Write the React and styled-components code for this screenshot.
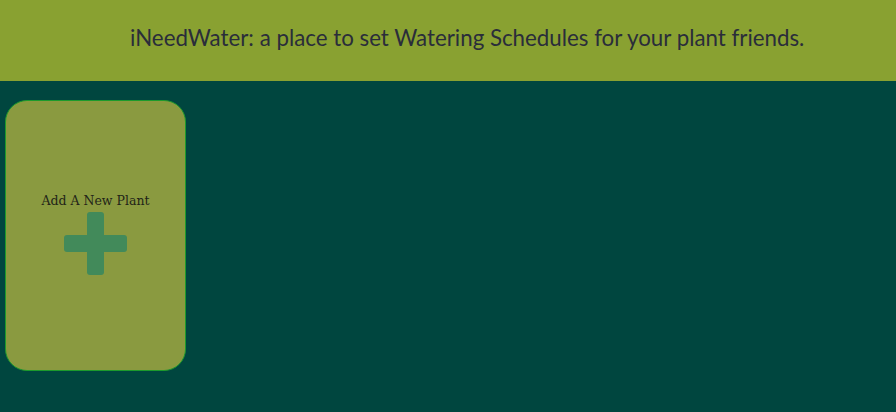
import React from 'react'
import styled, { createGlobalStyle } from 'styled-components'

const GlobalStyle = createGlobalStyle`
    html, body {
        margin: 0;
        padding: 0;
        background: #00463f;
    }
    body {
        min-height: 412px;
    }
`

const Page = styled.div`
    width: 896px;
    height: 412px;
    background: #00463f;
    overflow: hidden;
`

const Header = styled.header`
    height: 81px;
    background: #89a131;
    display: flex;
    align-items: center;
    padding-left: 130px;
    box-sizing: border-box;
    h1 {
        margin: 0;
        font-family: Lato, "Liberation Sans", sans-serif;
        font-weight: 400;
        font-size: 22.3px;
        color: #2a2d3a;
        padding-bottom: 7px;
    }
`

const Garden = styled.main`
    display: flex;
    gap: 20px;
    padding: 19px 0 0 5px;
`

const AddCard = styled.div`
    width: 181px;
    height: 271px;
    box-sizing: border-box;
    background: #8a9a40;
    border: 1px solid #1c9a2c;
    border-radius: 22px;
    display: flex;
    flex-direction: column;
    align-items: center;
    justify-content: center;
    gap: 4px;
    padding-bottom: 3px;
    cursor: pointer;
    span {
        font-family: "DejaVu Serif", "Liberation Serif", serif;
        font-size: 12.5px;
        color: #1f2418;
    }
`

const Plus = () => (
    <svg width="63" height="63" viewBox="0 0 63 63">
        <rect x="23" y="0" width="17" height="63" rx="3" fill="#428a5a" />
        <rect x="0" y="23" width="63" height="17" rx="3" fill="#428a5a" />
    </svg>
)

export default function App() {
    return (
        <Page>
            <GlobalStyle />
            <Header>
                <h1>iNeedWater: a place to set Watering Schedules for your plant friends.</h1>
            </Header>
            <Garden>
                <AddCard>
                    <span>Add A New Plant</span>
                    <Plus />
                </AddCard>
            </Garden>
        </Page>
    )
}
